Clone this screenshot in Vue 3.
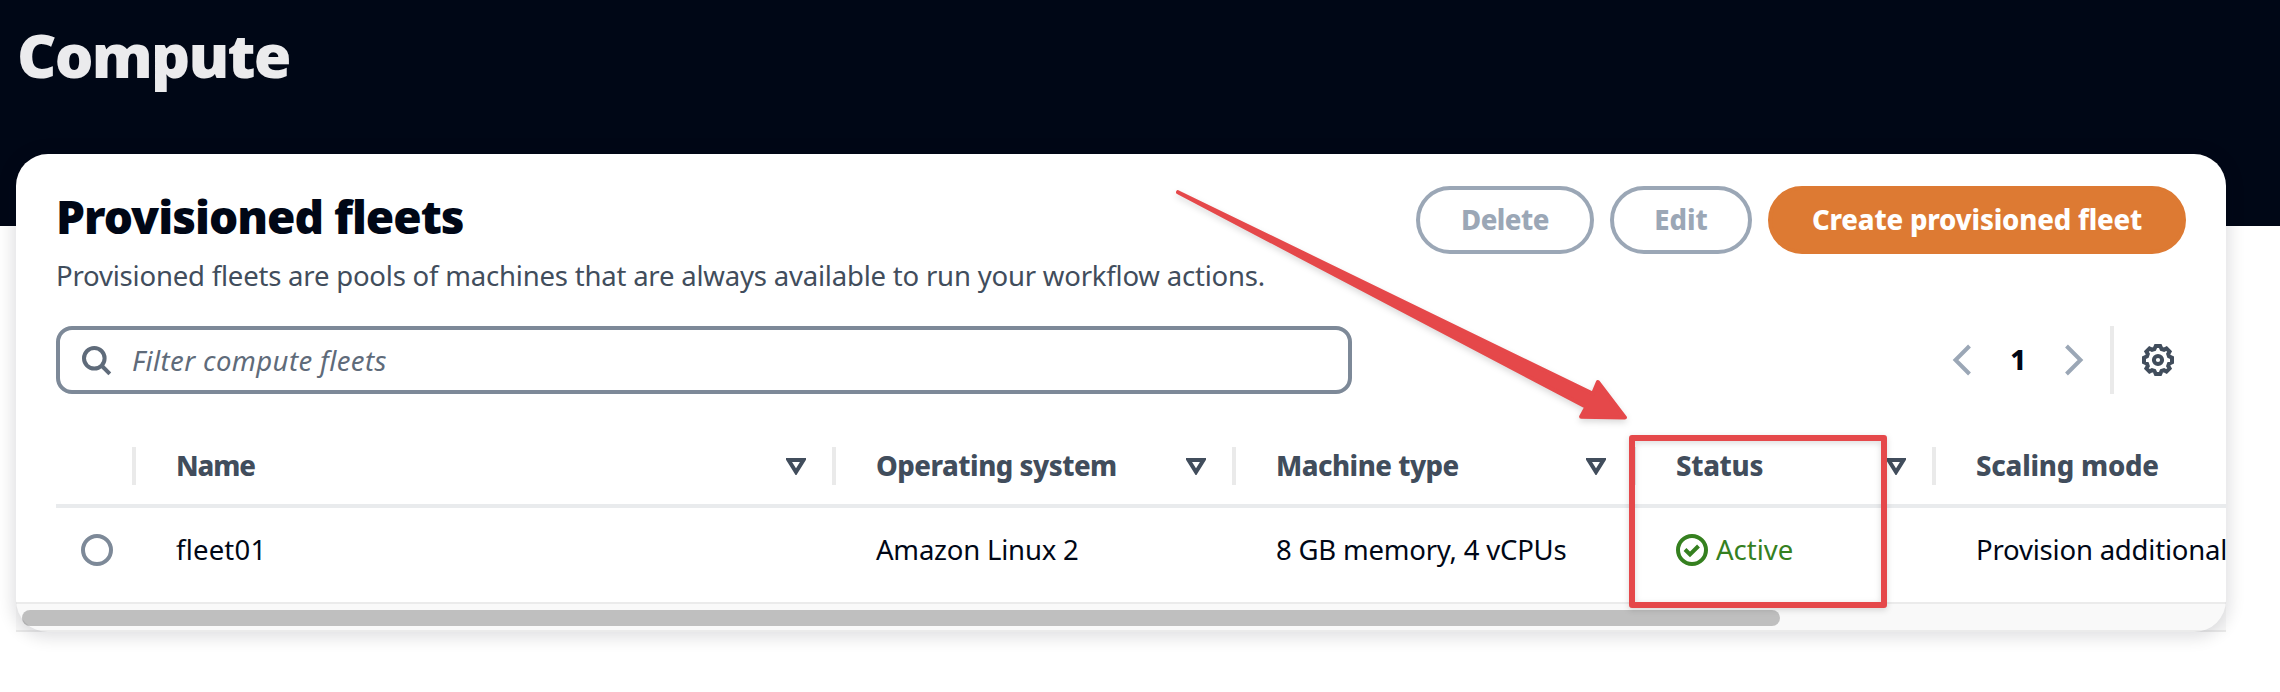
<script setup>
const columns = [
  { key: 'name', label: 'Name' },
  { key: 'os', label: 'Operating system' },
  { key: 'machine', label: 'Machine type' },
  { key: 'status', label: 'Status' },
  { key: 'scaling', label: 'Scaling mode' },
]
</script>

<template>
  <div class="page">
    <header class="banner"><h1>Compute</h1></header>

    <section class="card">
      <div class="head">
        <div class="titles">
          <h2>Provisioned fleets</h2>
          <p>Provisioned fleets are pools of machines that are always available to run your workflow actions.</p>
        </div>
        <div class="actions">
          <button class="btn delete" disabled><span>Delete</span></button>
          <button class="btn edit" disabled><span>Edit</span></button>
          <button class="btn primary"><span>Create provisioned fleet</span></button>
        </div>
      </div>

      <div class="tools">
        <div class="search">
          <svg width="32" height="32" viewBox="0 0 32 32">
            <circle cx="14.300" cy="14.300" r="10.300" />
            <path d="M21.500 21.500l8.300 8.300" />
          </svg>
          <span class="hint">Filter compute fleets</span>
        </div>
        <div class="pager">
          <svg class="chev" width="20" height="32" viewBox="0 0 20 32"><path d="M17.500 2L3.500 16l14 14" /></svg>
          <b>1</b>
          <svg class="chev" width="20" height="32" viewBox="0 0 20 32"><path d="M2.500 2l14 14-14 14" /></svg>
          <i class="sep"></i>
          <svg class="gear" width="32" height="32" viewBox="-16 -16 32 32">
            <path d="M-2.200-14H2.200L3.600-11 6-10.200 8.500-11.600 11.600-8.500 10.200-6 11-3.600 14-2.200V2.200L11 3.600 10.200 6 11.600 8.500 8.500 11.600 6 10.200 3.600 11 2.200 14H-2.200L-3.600 11-6 10.200-8.500 11.600-11.600 8.500-10.200 6-11 3.600-14 2.200V-2.200L-11-3.600-10.200-6-11.600-8.500-8.500-11.600-6-10.200-3.600-11z" />
            <circle r="4.100" />
          </svg>
        </div>
      </div>

      <div class="table">
        <div class="row header">
          <div class="cell pick"></div>
          <div v-for="c in columns" :key="c.key" :class="['cell', c.key]">
            <span>{{ c.label }}</span>
            <svg class="sort" width="20" height="17" viewBox="0 0 20 17"><path d="M2.500 2h15L10 14z" /></svg>
          </div>
        </div>
        <div class="row body">
          <div class="cell pick"><i class="radio"></i></div>
          <div class="cell name"><span>fleet01</span></div>
          <div class="cell os"><span>Amazon Linux 2</span></div>
          <div class="cell machine"><span>8 GB memory, 4 vCPUs</span></div>
          <div class="cell status">
            <svg width="32" height="32" viewBox="0 0 32 32"><circle cx="16" cy="16" r="14" /><path d="M9 15.500l5 5 8.500-8.500" /></svg>
            <span>Active</span>
          </div>
          <div class="cell scaling"><span>Provision additional</span></div>
        </div>
      </div>
      <div class="scrollbar"><i></i></div>
    </section>

    <div class="marker"></div>
    <svg class="arrow" width="480" height="250" viewBox="1160 180 480 250">
      <path d="M1178 192.200L1593 393.800l4.900-11.800 27 35.500-43.800-.8 5.300-9.700z" />
    </svg>
  </div>
</template>

<style>
body { margin: 0; background: #fff; }
</style>

<style scoped>
.page { position: relative; width: 2280px; height: 692px; overflow: hidden; background: #fff; color: #000716; font-family: "Noto Sans", "Open Sans", sans-serif; font-size: 27.5px; line-height: 40px; letter-spacing: -.2px; white-space: nowrap; }
.page * { box-sizing: border-box; }
svg { display: block; flex: none; fill: none; stroke: currentColor; stroke-width: 4; }
h1, h2, p { margin: 0; }
.banner { height: 226px; padding: 15px 0 0 17px; background: #000716; color: #ebebed; }
h1 { font-size: 61px; line-height: 80px; font-weight: 900; letter-spacing: -1.8px; }
.card { position: relative; width: 2210px; height: 478px; margin: -72px 0 0 16px; border-radius: 32px; background: #fff; box-shadow: 0 2px 16px 4px rgba(0, 7, 22, .12); }
.head { display: flex; justify-content: space-between; padding: 32px 40px 0; }
h2 { height: 70px; font-size: 46px; line-height: 61px; font-weight: 900; letter-spacing: -1px; }
p { color: #414d5c; }
.actions { display: flex; gap: 16px; }
.btn { display: flex; align-items: center; justify-content: center; height: 68px; padding: 0; border: 4px solid #9ba7b6; border-radius: 34px; background: #fff; color: #9ba7b6; font: 800 27.5px/40px "Noto Sans", sans-serif; }
.delete { width: 178px; letter-spacing: -.5px; }
.edit { width: 142px; }
.primary { width: 418px; border-color: #dd7a33; background: #dd7a33; color: #fff; letter-spacing: -.2px; }
.tools { display: flex; justify-content: space-between; margin-top: 30px; padding: 0 40px; }
.search { display: flex; align-items: center; width: 1296px; height: 68px; padding-left: 20px; gap: 20px; border: 4px solid #7d8998; border-radius: 16px; color: #5f6b7a; font-style: italic; letter-spacing: .4px; }
.hint { padding-top: 2px; }
.pager { display: flex; align-items: center; height: 68px; padding-right: 12px; }
.pager b { width: 92px; text-align: center; font-weight: 800; }
.chev { color: #9ba7b6; }
.sep { width: 4px; height: 68px; margin: 0 28px 0 26px; background: #eaeaea; }
.gear { color: #414d5c; }
.table { width: 2170px; margin: 22px 0 0 40px; overflow: hidden; }
.row { display: flex; width: 2400px; }
.cell { position: relative; display: flex; align-items: center; flex: none; padding-left: 40px; }
.pick { width: 80px; padding-left: 25px; }
.name { width: 700px; }
.os, .machine { width: 400px; }
.status { width: 300px; }
.scaling { width: 520px; }
.header { height: 92px; border-bottom: 4px solid #e9ebed; font-weight: 800; color: #414d5c; }
.header .cell { height: 38px; margin-top: 31px; justify-content: space-between; padding-right: 26px; border-right: 4px solid #eaeaea; }
.header .name { letter-spacing: -1.1px; }
.header .os { letter-spacing: -.5px; }
.header .machine { letter-spacing: -.5px; }
.header .status { letter-spacing: -.3px; }
.body { height: 84px; }
.body .name { letter-spacing: .2px; }
.body .status { gap: 8px; color: #35801f; letter-spacing: 0; }
.radio { width: 32px; height: 32px; border: 4px solid #7d8998; border-radius: 50%; }
.scrollbar { position: absolute; left: 0; bottom: 0; width: 2210px; height: 30px; padding: 6px; border: solid rgba(0, 0, 0, .08); border-width: 2px 0; background: rgba(0, 0, 0, .022); background-clip: padding-box; }
.scrollbar i { display: block; width: 1758px; height: 16px; border-radius: 8px; background: rgba(0, 0, 0, .23); }
.marker { position: absolute; left: 1629px; top: 435px; width: 258px; height: 173px; border: 6px solid #e5484a; border-radius: 3px; filter: drop-shadow(0 2px 3px rgba(0, 0, 0, .15)); }
.arrow { position: absolute; left: 1160px; top: 180px; fill: #e5484a; stroke: #e5484a; stroke-linejoin: round; filter: drop-shadow(0 3px 3px rgba(0, 0, 0, .15)); }
</style>
